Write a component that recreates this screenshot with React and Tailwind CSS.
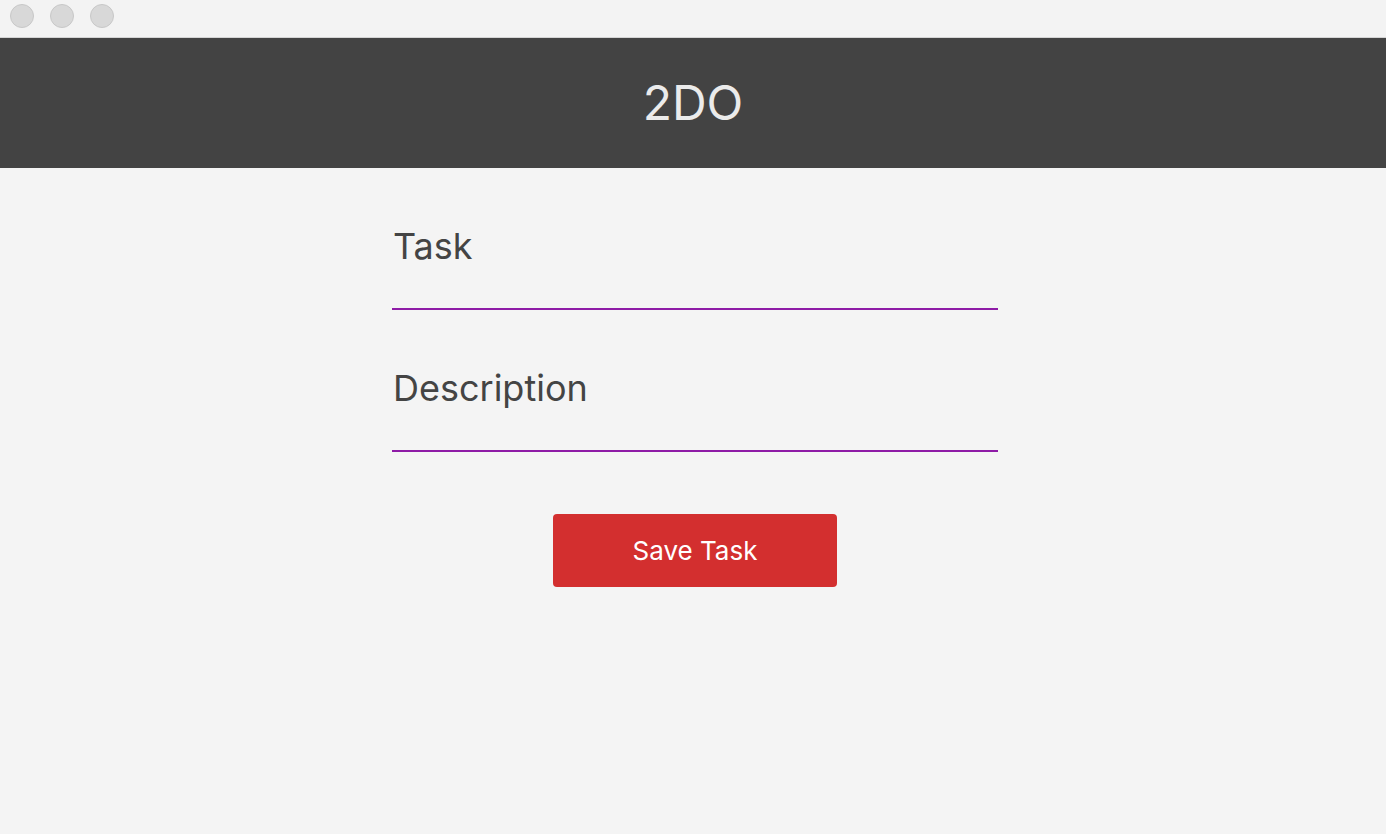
import React from "react";

export default function App() {
    return (
        <div className="min-h-screen bg-[#f4f4f4] font-['Inter',sans-serif]">
            {/* window chrome */}
            <div className="h-[38px] bg-[#f3f3f3] border-b border-[#d4d4d4] flex items-center gap-4 pl-[10px] pb-[5px]">
                <span className="w-6 h-6 rounded-full bg-[#d8d8d8] border border-[#c8c8c8]"></span>
                <span className="w-6 h-6 rounded-full bg-[#d8d8d8] border border-[#c8c8c8]"></span>
                <span className="w-6 h-6 rounded-full bg-[#d8d8d8] border border-[#c8c8c8]"></span>
            </div>

            <header className="h-[130px] bg-[#434343] flex items-center justify-center">
                <h1 className="text-[48px] text-[#ebebeb] font-normal">2DO</h1>
            </header>

            <main className="w-[610px] pl-[4px] mx-auto pt-[60px]">
                <div className="border-b-2 border-[#8e1ba6] h-[82px] pl-[1px]">
                    <label className="block text-[36px] text-[#444] leading-none">Task</label>
                </div>
                <div className="border-b-2 border-[#8e1ba6] h-[82px] pl-[1px] mt-[60px]">
                    <label className="block text-[36px] text-[#444] leading-none">Description</label>
                </div>
                <div className="flex justify-center mt-[62px]">
                    <button className="w-[284px] h-[73px] bg-[#d32f2f] rounded text-white text-[26px]">
                        Save Task
                    </button>
                </div>
            </main>
        </div>
    );
}
